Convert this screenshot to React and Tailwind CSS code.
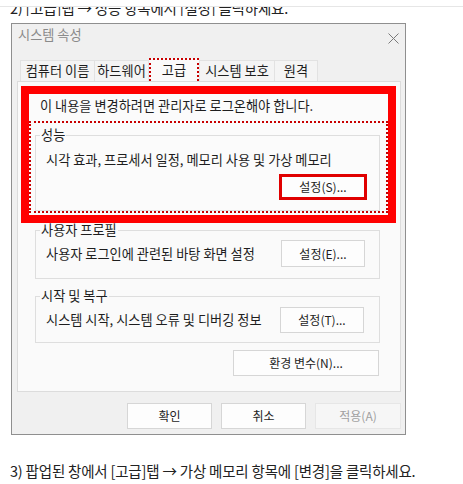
import React from "react";

function Btn({ children, className }) {
  return (
    <div className={"flex items-center justify-center text-[12px] leading-none " + className}>
      {children}
    </div>
  );
}

export default function App() {
  return (
    <div className="w-[463px] h-[484px] bg-white overflow-hidden font-['Noto_Sans_CJK_KR','Liberation_Sans',sans-serif] text-[#1e1e1e]">
      <div className="h-[6px] bg-white" />
      <div className="h-[1px] bg-[#e6e6e6]" />
      <div className="h-[9px] overflow-hidden">
        <div className="-mt-[9px] pl-[10px] text-[14.5px] leading-[20px] tracking-[-0.2px] text-[#222]">
          2) [고급]탭 → 성능 항목에서 [설정] 클릭하세요.
        </div>
      </div>

      {/* dialog */}
      <div className="ml-[11px] mt-[7px] w-[395px] h-[412px] border border-[#8f8f8f] bg-[#f0f0f0] flex flex-col">
        {/* title bar */}
        <div className="h-[34px] flex items-start justify-between pl-[6px] pr-[6px] pt-[2px]">
          <span className="text-[13.2px] leading-[18px] text-[#8a8a8a]">시스템 속성</span>
          <svg width="11" height="11" viewBox="0 0 11 11" className="mt-[7px]">
            <path d="M0.5 0.5 L10.5 10.5 M10.5 0.5 L0.5 10.5" stroke="#7a7a7a" strokeWidth="1" />
          </svg>
        </div>

        {/* tabs */}
        <div className="h-[23px] flex items-end pl-[8px] text-[13.2px]">
          <div className="h-[21px] w-[75px] flex items-center justify-center bg-[#f4f4f4] border border-b-0 border-[#e2e2e2]">컴퓨터 이름</div>
          <div className="h-[21px] w-[54px] flex items-center justify-center bg-[#f4f4f4] border border-l-0 border-b-0 border-[#e2e2e2]">하드웨어</div>
          <div className="h-[23px] w-[50px] flex items-center justify-center bg-[#fafafa] border-2 border-b-0 border-dotted border-[#c80000] pb-[2px]">고급</div>
          <div className="h-[21px] w-[76px] flex items-center justify-center bg-[#f4f4f4] border border-b-0 border-[#e2e2e2]">시스템 보호</div>
          <div className="h-[21px] w-[43px] flex items-center justify-center bg-[#f4f4f4] border border-l-0 border-b-0 border-[#e2e2e2]">원격</div>
        </div>

        {/* panel */}
        <div className="ml-[5px] w-[384px] h-[311px] bg-[#fafafa] border border-[#dcdcdc] flex flex-col text-[13.2px]">
          {/* red annotation box */}
          <div className="ml-[3px] mt-[4px] w-[375px] h-[137px] border-[8px] border-[#ff0000] bg-[#fbfbfb] flex flex-col">
            <div className="h-[27px] pt-[3px] pl-[11px] leading-[18px]">이 내용을 변경하려면 관리자로 로그온해야 합니다.</div>
            <div className="h-[92px] border-2 border-dotted border-[#c80000]">
              <fieldset className="ml-[4px] mt-[4px] w-[345px] h-[84px] border border-[#dedede] px-0">
                <legend className="ml-[4px] px-[1px] leading-[16px]">성능</legend>
                <div className="pl-[10px] mt-[8px] leading-[18px]">시각 효과, 프로세서 일정, 메모리 사용 및 가상 메모리</div>
                <div className="flex justify-end pr-[12px] mt-[5px]">
                  <Btn className="w-[88px] h-[26px] bg-[#fdfdfd] border-[3px] border-[#e00000]">설정(S)...</Btn>
                </div>
              </fieldset>
            </div>
          </div>

          <fieldset className="ml-[17px] w-[345px] border border-[#dedede] px-0 pb-[11px]">
            <legend className="ml-[4px] px-[1px] leading-[14px]">사용자 프로필</legend>
            <div className="mt-[3px] flex items-center justify-between pl-[10px] pr-[14px]">
              <span className="leading-[18px]">사용자 로그인에 관련된 바탕 화면 설정</span>
              <Btn className="w-[84px] h-[27px] bg-[#fdfdfd] border border-[#d6d6d6]">설정(E)...</Btn>
            </div>
          </fieldset>

          <fieldset className="ml-[17px] mt-[10px] w-[345px] border border-[#dedede] px-0 pb-[9px]">
            <legend className="ml-[4px] px-[1px] leading-[14px]">시작 및 복구</legend>
            <div className="mt-[4px] flex items-center justify-between pl-[10px] pr-[15px]">
              <span className="leading-[18px]">시스템 시작, 시스템 오류 및 디버깅 정보</span>
              <Btn className="w-[84px] h-[26px] bg-[#fdfdfd] border border-[#d6d6d6]">설정(T)...</Btn>
            </div>
          </fieldset>

          <div className="flex justify-end pr-[21px] mt-[7px]">
            <Btn className="w-[146px] h-[26px] bg-[#fdfdfd] border border-[#d6d6d6]">환경 변수(N)...</Btn>
          </div>
        </div>

        {/* dialog buttons */}
        <div className="mt-[11px] flex justify-end gap-[9px] pr-[4px]">
          <Btn className="w-[85px] h-[26px] bg-[#fdfdfd] border border-[#d6d6d6]">확인</Btn>
          <Btn className="w-[85px] h-[26px] bg-[#fdfdfd] border border-[#d6d6d6]">취소</Btn>
          <Btn className="w-[86px] h-[26px] bg-[#f6f6f6] border border-[#e6e6e6] text-[#a0a0a0]">적용(A)</Btn>
        </div>
      </div>

      <div className="mt-[25px] pl-[10px] text-[14.5px] leading-[22px] tracking-[-0.2px] text-[#222]">
        3) 팝업된 창에서 [고급]탭 → 가상 메모리 항목에 [변경]을 클릭하세요.
      </div>
    </div>
  );
}
